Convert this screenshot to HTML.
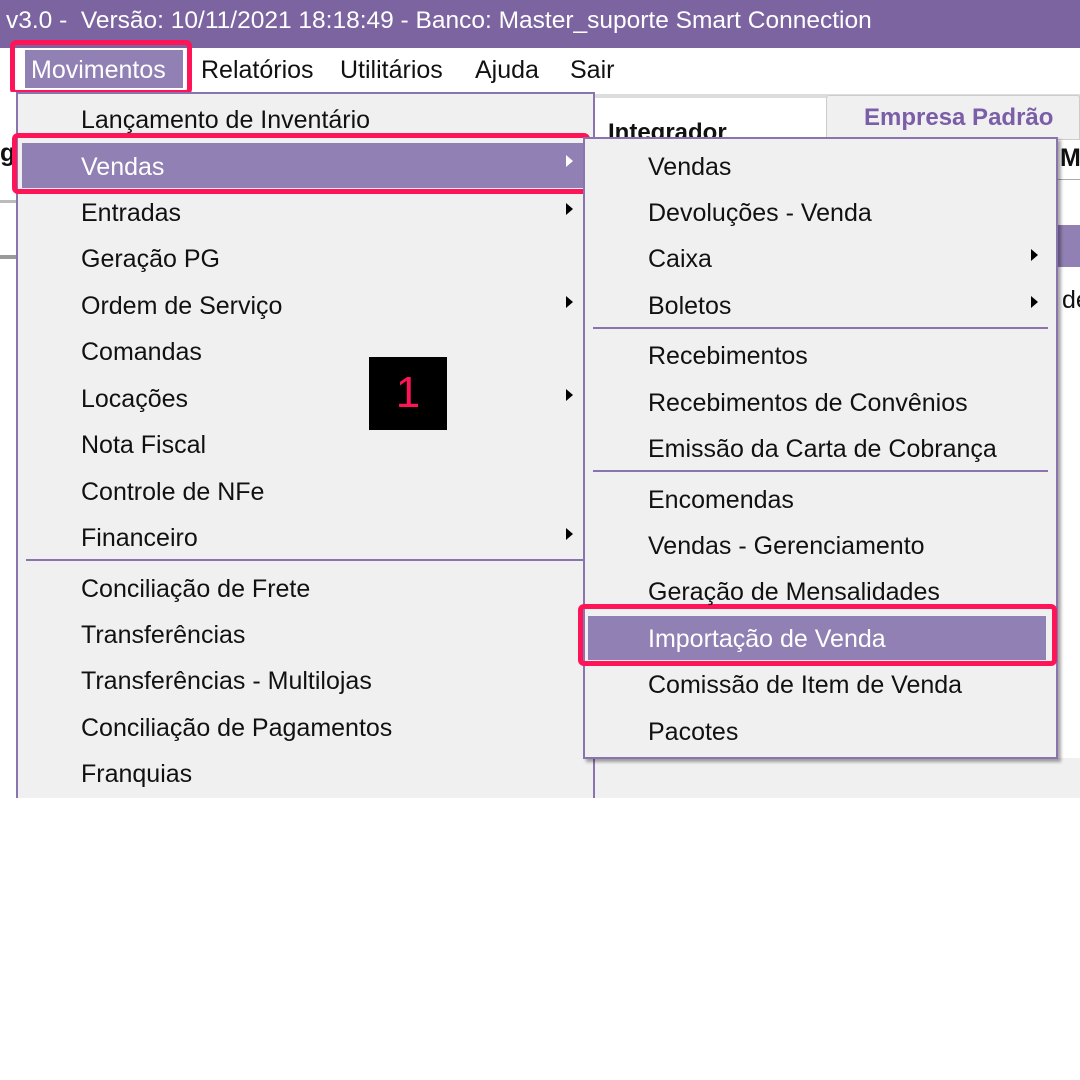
<!DOCTYPE html>
<html><head><meta charset="utf-8"><style>
*{margin:0;padding:0;box-sizing:border-box}
body{width:1080px;height:1080px;background:#fff;position:relative;overflow:hidden;font-family:"Liberation Sans","DejaVu Sans",sans-serif;}
.a{position:absolute}
.t{position:absolute;font-size:25px;color:#111;white-space:nowrap;line-height:26px}
.arr{position:absolute;width:0;height:0;border-top:6px solid transparent;border-bottom:6px solid transparent;border-left:7px solid #000}
</style></head><body>
<div class="a" style="left:0;top:0;width:1080px;height:48px;background:#7b64a0"></div>
<div class="t" style="left:6px;top:8px;color:#fff;font-size:24.5px">v3.0 -&nbsp; Versão: 10/11/2021 18:18:49 - Banco: Master_suporte Smart Connection</div>
<div class="a" style="left:0;top:48px;width:1080px;height:44px;background:#fff"></div>
<div class="a" style="left:25px;top:50px;width:158px;height:38px;background:#9080b4"></div>
<div class="a" style="left:10px;top:40px;width:182px;height:55px;border:5px solid #ff1457;border-radius:6px"></div>
<div class="t" style="left:31px;top:57px;color:#fff">Movimentos</div>
<div class="t" style="left:201px;top:57px">Relatórios</div>
<div class="t" style="left:340px;top:57px">Utilitários</div>
<div class="t" style="left:475px;top:57px">Ajuda</div>
<div class="t" style="left:570px;top:57px">Sair</div>
<!-- background content -->
<div class="a" style="left:0;top:92px;width:1080px;height:706px;background:#fff"></div>
<div class="a" style="left:594px;top:94px;width:486px;height:4px;background:#ddd"></div>
<div class="a" style="left:826px;top:95px;width:254px;height:45px;background:#f0f0f0;border:1px solid #ccc;border-radius:3px 3px 0 0"></div>
<div class="t" style="left:864px;top:105px;color:#7b5ea8;font-weight:bold;font-size:24px">Empresa Padrão</div>
<div class="t" style="left:608px;top:120px;font-weight:bold;font-size:24px">Integrador</div>
<div class="a" style="left:1058px;top:140px;width:22px;height:40px;background:#fff;border-bottom:1px solid #aaa"></div>
<div class="t" style="left:1060px;top:145px;font-weight:bold">M</div>
<div class="a" style="left:1058px;top:225px;width:22px;height:42px;background:#9080b4"></div>
<div class="t" style="left:1062px;top:287px">de</div>
<div class="t" style="left:0;top:140px;font-weight:bold">g</div>
<div class="a" style="left:0;top:200px;width:16px;height:3px;background:#bbb"></div>
<div class="a" style="left:0;top:255px;width:16px;height:4px;background:#999"></div>
<div class="a" style="left:594px;top:758px;width:486px;height:40px;background:#f0f0f0"></div>
<!-- main menu -->
<div class="a" style="left:16px;top:92px;width:579px;height:706px;background:#f0f0f0;border:2px solid #8a74b0;border-bottom:none"></div>
<div class="a" style="left:26px;top:559px;width:557px;height:2px;background:#8a74b0"></div>
<div class="a" style="left:22px;top:143px;width:566px;height:45px;background:#9080b4"></div>
<div class="a" style="left:12px;top:133px;width:578px;height:61px;border:5px solid #ff1457;border-radius:6px"></div>
<div class="t" style="left:81px;top:107px">Lançamento de Inventário</div>
<div class="t" style="left:81px;top:154px;color:#fff">Vendas</div>
<div class="t" style="left:81px;top:200px">Entradas</div>
<div class="t" style="left:81px;top:246px">Geração PG</div>
<div class="t" style="left:81px;top:293px">Ordem de Serviço</div>
<div class="t" style="left:81px;top:339px">Comandas</div>
<div class="t" style="left:81px;top:386px">Locações</div>
<div class="t" style="left:81px;top:432px">Nota Fiscal</div>
<div class="t" style="left:81px;top:479px">Controle de NFe</div>
<div class="t" style="left:81px;top:525px">Financeiro</div>
<div class="t" style="left:81px;top:576px">Conciliação de Frete</div>
<div class="t" style="left:81px;top:622px">Transferências</div>
<div class="t" style="left:81px;top:668px">Transferências - Multilojas</div>
<div class="t" style="left:81px;top:715px">Conciliação de Pagamentos</div>
<div class="t" style="left:81px;top:761px">Franquias</div>
<div class="arr" style="left:566px;top:155px;border-left-color:#fff"></div>
<div class="arr" style="left:566px;top:203px"></div>
<div class="arr" style="left:566px;top:296px"></div>
<div class="arr" style="left:566px;top:389px"></div>
<div class="arr" style="left:566px;top:528px"></div>
<div class="a" style="left:369px;top:357px;width:78px;height:73px;background:#000"></div>
<div class="t" style="left:369px;top:369px;width:78px;text-align:center;color:#ff1457;font-size:44px;line-height:48px">1</div>
<!-- submenu -->
<div class="a" style="left:583px;top:137px;width:475px;height:622px;background:#f0f0f0;border:2px solid #8a74b0;box-shadow:3px 3px 3px rgba(0,0,0,.35)"></div>
<div class="a" style="left:593px;top:327px;width:455px;height:2px;background:#8a74b0"></div>
<div class="a" style="left:593px;top:470px;width:455px;height:2px;background:#8a74b0"></div>
<div class="a" style="left:588px;top:616px;width:458px;height:44px;background:#9080b4"></div>
<div class="a" style="left:578px;top:604px;width:479px;height:62px;border:5px solid #ff1457;border-radius:6px"></div>
<div class="t" style="left:648px;top:154px">Vendas</div>
<div class="t" style="left:648px;top:200px">Devoluções - Venda</div>
<div class="t" style="left:648px;top:246px">Caixa</div>
<div class="t" style="left:648px;top:293px">Boletos</div>
<div class="t" style="left:648px;top:343px">Recebimentos</div>
<div class="t" style="left:648px;top:390px">Recebimentos de Convênios</div>
<div class="t" style="left:648px;top:436px">Emissão da Carta de Cobrança</div>
<div class="t" style="left:648px;top:487px">Encomendas</div>
<div class="t" style="left:648px;top:533px">Vendas - Gerenciamento</div>
<div class="t" style="left:648px;top:579px">Geração de Mensalidades</div>
<div class="t" style="left:648px;top:626px;color:#fff">Importação de Venda</div>
<div class="t" style="left:648px;top:672px">Comissão de Item de Venda</div>
<div class="t" style="left:648px;top:719px">Pacotes</div>
<div class="arr" style="left:1031px;top:249px"></div>
<div class="arr" style="left:1031px;top:296px"></div>
</body></html>
